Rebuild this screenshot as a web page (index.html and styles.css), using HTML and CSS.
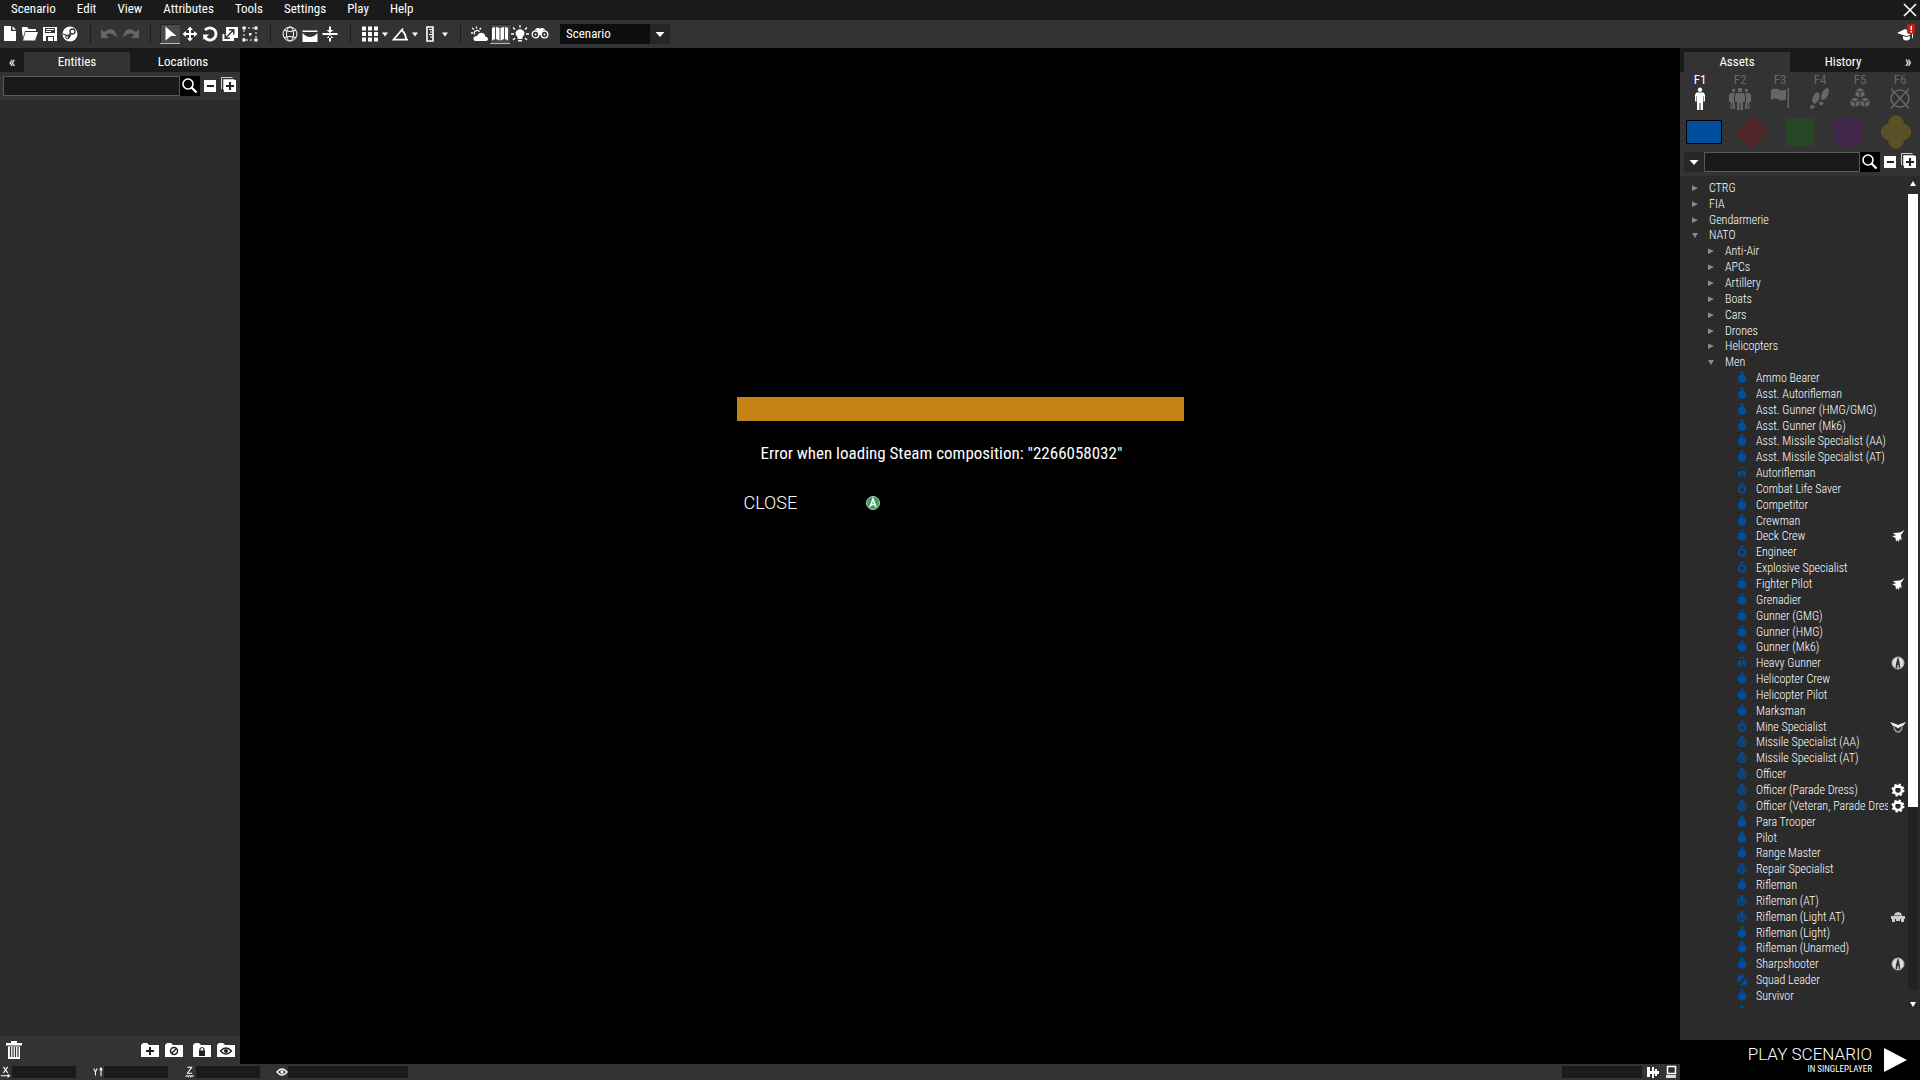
FILE: index.html
```html
<!DOCTYPE html>
<html lang="en">
<head>
<meta charset="utf-8">
<title>Scenario Editor</title>
<link rel="stylesheet" href="styles.css">
</head>
<body>
<svg class="defs" aria-hidden="true">
  <symbol id="search" viewBox="0 0 20 20"><circle cx="8" cy="8" r="5" fill="none" stroke="#fff" stroke-width="1.6"/><path d="M11.5 11.5l5 5" stroke="#fff" stroke-width="2.4"/></symbol>
  <symbol id="minus" viewBox="0 0 20 20"><path fill="#fff" d="M4 4h12v12H4z"/><path fill="#222" d="M7 9h7v2H7z"/></symbol>
  <symbol id="plus" viewBox="0 0 20 20"><path d="M1.500 13V1.500h11M3.500 14V3.500h11" fill="none" stroke="#ccc"/><path fill="#fff" d="M4 4h12v12H4z"/><path fill="#222" d="M9 6h2v3h3v2h-3v3H9v-3H6V9h3z"/></symbol>
  <symbol id="down" viewBox="0 0 10 20"><path fill="#fff" d="M2 8.500h6L5 12.500z"/></symbol>
  <symbol id="bigdown" viewBox="0 0 20 20"><path fill="#fff" d="M5.500 8h9L10 13z"/></symbol>
  <symbol id="closed" viewBox="0 0 16 16"><path fill="#8a8a8a" d="M5 5.500l6 2.500-6 3z"/></symbol>
  <symbol id="open" viewBox="0 0 16 16"><path fill="#8a8a8a" d="M5 6h6l-3 5z"/></symbol>
  <symbol id="man" viewBox="0 0 16 16"><circle cx="8" cy="8.500" r="4.300" fill="#004f9e"/><path d="M6 2.500h4v1H6zM7 1.500h2v1H7z" fill="#004f9e"/></symbol>
  <symbol id="man-ring" viewBox="0 0 16 16"><circle cx="8" cy="8.500" r="3.200" fill="none" stroke="#004f9e" stroke-width="2"/><path d="M6 2.500h4v1H6zM7 1.500h2v1H7z" fill="#004f9e"/></symbol>
  <symbol id="man-gun" viewBox="0 0 16 16"><path d="M7 4.500v4.500l-1 3Q4 11 4 8.500 4 5.500 7 4.500zM9 4.500v4.500l1 3q2-1 2-3.500 0-3-3-4z" fill="#004f9e"/><path d="M8 6v4M6 2.500h4" stroke="#004f9e" fill="none"/></symbol>
  <symbol id="man-x" viewBox="0 0 16 16"><circle cx="8" cy="8.500" r="3.800" fill="none" stroke="#004f9e" stroke-width="1.500"/><path d="M5.500 6l5 5m0-5l-5 5M6 3h4" stroke="#004f9e" stroke-width="1.300"/></symbol>
  <symbol id="man-at" viewBox="0 0 16 16"><circle cx="8" cy="8.500" r="3.800" fill="none" stroke="#004f9e" stroke-width="1.500"/><path d="M8 6l-1.500 2h3L8 11M6 3h4" stroke="#004f9e" stroke-width="1.300" fill="none"/></symbol>
  <symbol id="man-lead" viewBox="0 0 16 16"><path d="M4 10.500a4 4 0 0 1 6.500-5.500zM6 12.500a4 4 0 0 0 6-6zM6 2.500h4v1H6z" fill="#004f9e"/></symbol>
  <symbol id="jet" viewBox="0 0 16 16"><path fill="#fff" d="M14.500 2L10 4.500 3 5l3 2.500L2 8l3.500 2 .5 3.500 1.500-1.500L9 14l.5-3 2 1-.5-5z"/></symbol>
  <symbol id="apex" viewBox="0 0 16 16"><circle cx="8" cy="8" r="6" fill="#ddd" stroke="#aaa"/><path fill="#333" d="M7.500 3h1l1 4 .8 6H9l-.5-3h-1v3H5.500L6 8.500z"/></symbol>
  <symbol id="wings" viewBox="0 0 16 16"><path fill="#eee" d="M0 3l6 2 2 1 2-1 6-2-3 4-3 1-2 1.500L6 8 3 7z"/><path fill="none" stroke="#999" stroke-width="1.500" d="M4 8q1 5 4 5t4-5"/></symbol>
  <symbol id="gear" viewBox="0 0 16 16"><circle cx="8" cy="8" r="4" fill="none" stroke="#fff" stroke-width="2.600"/><circle cx="8" cy="8" r="5.500" fill="none" stroke="#fff" stroke-width="2" stroke-dasharray="2.200 2.120"/><path d="M6 5.500h4" stroke="#fff"/></symbol>
  <symbol id="truck" viewBox="0 0 16 16"><path fill="#ccc" d="M1 7h3l1-3 3-1 3 1 1 3h3v3H1zM2 9h3v4H2zm9 0h3v4h-3zM6 9h4v3H6z"/><path stroke="#777" d="M5 6.500h6"/></symbol>
  <symbol id="folder" viewBox="0 0 20 20"><path fill="#fff" d="M1 17V5l2-2h4l2 2h10v12z"/></symbol>
  <symbol id="eye" viewBox="0 0 12 12"><path d="M1 6q5-6 10 0-5 6-10 0z" fill="none" stroke="#fff" stroke-width="1.300"/><circle cx="6" cy="6" r="1.700" fill="#fff"/></symbol>
</svg>

<nav class="menubar" aria-label="Main menu">
  <button>Scenario</button><button>Edit</button><button>View</button><button>Attributes</button><button>Tools</button><button>Settings</button><button>Play</button><button>Help</button>
  <button class="exit" aria-label="Close editor"><svg viewBox="0 0 20 20"><path d="M4 4l12 12M16 4L4 16" stroke="#fff" stroke-width="1.600"/></svg></button>
</nav>

<div class="toolbar">
  <button aria-label="New"><svg viewBox="0 0 20 20"><path fill="#fff" d="M4 2h7v5h5v10H4zM12.500 2L16 5.800h-3.500z"/></svg></button>
  <button aria-label="Open"><svg viewBox="0 0 20 20"><path fill="#fff" d="M2 7V3h5l2 2h7v2H5l-2 7zM5.500 8H18l-3 8.500H3z"/></svg></button>
  <button aria-label="Save"><svg viewBox="0 0 20 20"><path fill="#fff" d="M3 3h14v14H3z"/><path fill="#333" d="M5 4h10v5H5zM6 12h8v5H6z"/><path fill="#fff" d="M6 5h8v1H6zm0 2h5v1H6zM8 13h5v4H8z"/></svg></button>
  <button aria-label="Publish"><svg viewBox="0 0 20 20"><circle cx="10" cy="10" r="7.500" fill="#fff"/><circle cx="12.500" cy="7.500" r="2.500" fill="none" stroke="#333" stroke-width="1.300"/><path d="M3 10l5 2 3-3M11 11l-3 3" stroke="#333" fill="none" stroke-width="1.300"/><circle cx="7.500" cy="13" r="1.800" fill="none" stroke="#333"/></svg></button>
  <i class="sep"></i>
  <button aria-label="Undo"><svg viewBox="0 0 20 20"><path fill="#666" d="M1 5v9h8L6 11q5-4 11 3-1-10-8-8.500Q6 6 4 8z"/></svg></button>
  <button aria-label="Redo"><svg viewBox="0 0 20 20"><path fill="#666" d="M19 5v9h-8l3-3Q9 7 3 14 4 4 11 5.500 14 6 16 8z"/></svg></button>
  <i class="sep"></i>
  <button class="on" aria-label="Select"><svg viewBox="0 0 20 20"><path fill="#fff" d="M5.500 2.500L16.500 12H11l-5.500 4.500z"/></svg></button>
  <button aria-label="Move"><svg viewBox="0 0 20 20"><path fill="#fff" d="M10 2.500L13 6h-2v3h3V7l3.500 3-3.500 3v-2h-3v3h2l-3 3.500L7 14h2v-3H6v2l-3.500-3L6 7v2h3V6H7z"/></svg></button>
  <button aria-label="Rotate"><svg viewBox="0 0 20 20"><path d="M5 6Q8 3 12 4.300 16 6 16 10q-.5 5-5 6-4 .5-6-3" fill="none" stroke="#fff" stroke-width="2.800"/><path fill="#fff" d="M3 10.500h6L3.500 16z"/></svg></button>
  <button aria-label="Scale"><svg viewBox="0 0 20 20"><path fill="#fff" d="M6 3h12v11h-4v3H2.500v-7H6z"/><path d="M5.500 14l8-8M9 5.800h4.800v4.700M5.200 10v4.200H10" fill="none" stroke="#333" stroke-width="1.500"/></svg></button>
  <button aria-label="Area"><svg viewBox="0 0 20 20"><path d="M4 4h12v12H4z" fill="none" stroke="#fff" stroke-dasharray="2 2"/><path fill="#fff" d="M2.500 2.500h3v3h-3zm12 0h3v3h-3zm-12 12h3v3h-3zm12 0h3v3h-3zM9 9h2.500v2.500H9z"/></svg></button>
  <i class="sep"></i>
  <button aria-label="Coordinate space"><svg viewBox="0 0 20 20"><g fill="none" stroke="#fff"><circle cx="10" cy="10" r="7"/><ellipse cx="10" cy="10" rx="3.500" ry="7"/><path d="M4 6.500q6 2 12 0M4 13.500q6-2 12 0"/></g></svg></button>
  <button aria-label="Surface"><svg viewBox="0 0 20 20"><path fill="#fff" d="M2.500 6.500h15V8h-15zM2.500 9Q10 17 17.500 9v9h-15z"/></svg></button>
  <button aria-label="Vertical mode"><svg viewBox="0 0 20 20"><path fill="#fff" d="M2.500 9h15v2h-15zM9 2.500h2V8H9zM9 12h2v5.500H9zM6.500 6h7L10 9zM6.500 14h7L10 11z"/></svg></button>
  <i class="sep"></i>
  <button aria-label="Translation grid"><svg viewBox="0 0 20 20"><path d="M2 4.500h16M2 10h16M2 15.500h16" stroke="#fff" stroke-width="4" stroke-dasharray="4 2"/></svg></button>
  <button class="half" aria-label="Translation options"><svg><use href="#down"/></svg></button>
  <button aria-label="Rotation grid"><svg viewBox="0 0 20 20"><path d="M13 4.500L3.500 15.700h14.500M12 6.500q4 3.500 4 9" fill="none" stroke="#fff" stroke-width="1.700"/></svg></button>
  <button class="half" aria-label="Rotation options"><svg><use href="#down"/></svg></button>
  <button aria-label="Scaling grid"><svg viewBox="0 0 20 20"><path d="M7 3h6v14H7z" fill="none" stroke="#fff" stroke-width="1.600"/><path d="M9 5.500h4M10 8h3M9 10.500h4M10 13h3" stroke="#fff" stroke-width="1.200"/></svg></button>
  <button class="half" aria-label="Scaling options"><svg><use href="#down"/></svg></button>
  <i class="sep"></i>
  <button aria-label="Weather"><svg viewBox="0 0 20 20"><path fill="#fff" d="M5 17q-2-1-1.500-3.500Q5 11.500 7 12q2-4 5.500-3 3 1 2.500 3.500 3 .5 3 2.500t-2 2z"/><path d="M4.500 10.500Q3.500 7 7 6.300q2 0 2.500 1.500M1 9h2M2 4l2 1.500M6.500 2.500v2M11 4L9.700 5.500" stroke="#fff" stroke-width="1.300" fill="none"/></svg></button>
  <button class="on" aria-label="Map"><svg viewBox="0 0 20 20"><path fill="#fff" d="M2 4l3-1v12l-3 1.500zM6 3l3.500 1v12.500L6 15zM10.500 4L14 3v12l-3.500 1.500zM15 3l3 1v12.500L15 15z"/></svg></button>
  <button aria-label="Lighting"><svg viewBox="0 0 20 20"><path fill="#fff" d="M7.500 13q-2.500-2-2-4.500Q6.500 5.500 10 5.300q3.500.2 4.500 3.200.5 2.500-2 4.500v2h-5zM8 16h4v1.500H8z"/><path d="M10 1v2.500M1 10h3M16 10h3M3 3.500l2 2M17 3.500l-2 2M3 16l2-2M17 16l-2-2" stroke="#fff" stroke-width="1.300"/></svg></button>
  <button aria-label="Vision"><svg viewBox="0 0 20 20"><g fill="none" stroke="#fff" stroke-width="1.300"><circle cx="5.500" cy="10.500" r="3.300"/><circle cx="14.500" cy="10.500" r="3.300"/></g><circle cx="5.500" cy="10.500" r="1" fill="#fff"/><circle cx="14.500" cy="10.500" r="1" fill="#fff"/><path fill="#fff" d="M4 6.500l3-2.500h2l1 1 1-1h2l3 2.500h-3l-2 2.500v2H9V9L7 6.500z"/></svg></button>
  <select class="combo" aria-label="Scenario phase"><option>Scenario</option></select><span class="combo-arrow"><svg><use href="#bigdown"/></svg></span>
  <button class="tutorial" aria-label="Tutorials"><svg viewBox="0 0 20 20"><path fill="#fff" d="M1 9l8-4 8 4v4l-1 2V9.500l-2 1V15q-4 3-7 0v-4z"/><path d="M7 11.500q4 2 7 0" stroke="#333" fill="none"/><rect x="11" y="0" width="8" height="10" rx="2" fill="#c4201a"/><path fill="#fff" d="M14.500 2h1.500v4h-1.500zM14.500 7h1.500v1.500h-1.500z"/></svg></button>
</div>

<div class="workspace">
  <div class="stage">
    <aside class="left">
      <div class="tabs"><button class="fold">«</button><button class="tab active">Entities</button><button class="tab">Locations</button></div>
      <div class="searchrow"><input type="text" aria-label="Search entities"><button class="find" aria-label="Search"><svg><use href="#search"/></svg></button><button aria-label="Collapse all"><svg><use href="#minus"/></svg></button><button aria-label="Expand all"><svg><use href="#plus"/></svg></button></div>
      <div class="entities"></div>
      <div class="layerbar">
        <button class="trash" aria-label="Delete"><svg viewBox="0 0 20 20"><path fill="#fff" d="M2 3h5V1h6v2h5v2.500H2zM4 6.500h12V19H4z"/><path d="M6.500 7v10M9 7v10M11.500 7v10M14 7v10" stroke="#333" stroke-width="1.200"/></svg></button>
        <button aria-label="New layer"><svg viewBox="0 0 20 20"><use href="#folder"/><path d="M10 7v8M6 11h8" stroke="#222" stroke-width="2"/></svg></button>
        <button aria-label="Disable layer"><svg viewBox="0 0 20 20"><use href="#folder"/><circle cx="10" cy="11" r="3.500" fill="none" stroke="#222" stroke-width="1.500"/><path d="M7.500 13.500l5-5" stroke="#222" stroke-width="1.500"/></svg></button>
        <button class="lock" aria-label="Lock layer"><svg viewBox="0 0 20 20"><use href="#folder"/><path fill="#222" d="M7 10.500h6V16H7z"/><path d="M8 11V9q2-3 4 0v2" fill="none" stroke="#222" stroke-width="1.200"/></svg></button>
        <button aria-label="Toggle layer visibility"><svg viewBox="0 0 20 20"><use href="#folder"/><path d="M4.500 11q5.500-6 11 0-5.500 6-11 0z" fill="none" stroke="#222" stroke-width="1.400"/><circle cx="10" cy="11" r="2" fill="#222"/></svg></button>
      </div>
    </aside>
    <main>
      <section class="dialog" role="alertdialog" aria-labelledby="msg">
        <div class="title"></div>
        <p id="msg">Error when loading Steam composition: "2266058032"</p>
        <button class="close">CLOSE<svg viewBox="0 0 14 14" aria-hidden="true"><circle cx="7" cy="7" r="6.500" fill="#3e9a63" stroke="#a9d8b8"/><path d="M4 11l3-8 3 8M5 8.500h4" fill="none" stroke="#fff" stroke-width="1.600"/></svg></button>
      </section>
    </main>
  </div>

  <footer class="status">
    <label><svg viewBox="0 0 12 14"><path d="M3 1l5 7M8 1L3 8M0 11.500h9" stroke="#fff" stroke-width="1.200"/><path fill="#fff" d="M8 9l3 2.500L8 14z"/></svg><input type="text" aria-label="X"></label>
    <label><svg viewBox="0 0 12 14"><path d="M1 3l2 4 2-4M3 7v4M9.500 3v9" stroke="#fff" stroke-width="1.200" fill="none"/><path fill="#fff" d="M7.500 5l2-4 2 4z"/></svg><input type="text" aria-label="Y"></label>
    <label><svg viewBox="0 0 12 14"><path d="M3 1.500h5L3 8.500h5.500M1 12.500q1.500-3 3 0 1.500-3 3 0 1.500-3 3 0" stroke="#fff" stroke-width="1.200" fill="none"/></svg><input type="text" aria-label="Z"></label>
    <label><svg viewBox="0 0 12 12"><use href="#eye"/></svg><input class="wide" type="text" aria-label="View distance"></label>
    <output></output>
    <span class="indicators">
      <svg viewBox="0 0 14 14"><path fill="#fff" d="M1 2h3v4h2V2h2v4h1V4h2v2h2v3h-2v2H9V9H8v4H6V9H4v3H1z"/></svg>
      <svg viewBox="0 0 14 14"><path fill="none" stroke="#fff" stroke-width="1.500" d="M3.500 1.500h8v7h-8z"/><path fill="#ddd" d="M2 10h10v3H2z"/></svg>
    </span>
  </footer>

  <aside class="right">
    <div class="tabs"><button class="tab active">Assets</button><button class="tab">History</button><button class="fold">»</button></div>
    <div class="modes">
      <button class="current">F1<svg viewBox="0 0 24 24"><circle cx="12" cy="2.800" r="2.200" fill="#fff"/><path fill="#fff" d="M8.500 5.500h7l1.500 2v7h-1.500V9H15v14h-2.500v-7h-1v7H9V9h-.5v5.500H7v-7z"/></svg></button>
      <button>F2<svg viewBox="0 0 24 24"><path fill="#666" d="M10 1h4v4h-4zM4 2h3v3H4zm13 0h3v3h-3zM8.500 6h7L17 8v7h-2v8h-2.500v-7h-1v7H9v-8H7V8zM1 7l2-1h4L6 8v8h1v6H4.500v-6h-.8v6H2.500v-7H1zM17 6h4l2 1v8h-1.500v7h-1.200v-6h-.8v6H17v-6h1V8z"/></svg></button>
      <button>F3<svg viewBox="0 0 24 24"><path fill="#666" d="M19.500 1H21v20h-1.500zM3 3q4-2.500 8-.5t7 0v10q-3.500 2-7.500 0T3 13z"/></svg></button>
      <button>F4<svg viewBox="0 0 24 24"><g fill="#666"><ellipse cx="8" cy="11" rx="3.200" ry="6" transform="rotate(22 8 11)"/><ellipse cx="17" cy="7" rx="3.200" ry="6.500" transform="rotate(25 17 7)"/><path d="M3 17.500l4 1.500-2 3-3-.5zM12 14l4 2-2 2.500-3-1z"/></g></svg></button>
      <button>F5<svg viewBox="0 0 24 24"><path fill="#666" d="M12 1l4 2-4 2-4-2zM7.500 4l4 2v4.500l-4-2zM16.500 4l-4 2v4.500l4-2zM7 10.500l4 2-4 2-4-2zM17 10.500l4 2-4 2-4-2zM2.500 13.500l4 2V20l-4-2zM11.500 13.500l-4 2V20l4-2zM12.500 13.500l4 2V20l-4-2zM21.500 13.500l-4 2V20l4-2z"/></svg></button>
      <button>F6<svg viewBox="0 0 24 24"><ellipse cx="12" cy="11.500" rx="9" ry="8.500" fill="none" stroke="#666" stroke-width="1.600"/><path d="M3 1.500l18 20M21 1.500l-18 20" stroke="#666" stroke-width="1.600"/></svg></button>
    </div>
    <div class="sides">
      <button aria-label="BLUFOR"><svg viewBox="0 0 36 36"><path d="M.5 6.500h35v23H.5z" fill="#004d9b" stroke="#000"/></svg></button>
      <button aria-label="OPFOR"><svg viewBox="0 0 36 36"><path d="M18 2l16 16-16 16L2 18z" fill="#4e2628" stroke="#5c2022"/></svg></button>
      <button aria-label="Independent"><svg viewBox="0 0 36 36"><path d="M5 5h26v26H5z" fill="#264726" stroke="#1c501f"/></svg></button>
      <button aria-label="Civilian"><svg viewBox="0 0 36 36"><path d="M5 5h26v26H5z" fill="#40264a" stroke="#4c1c5c"/></svg></button>
      <button aria-label="Empty"><svg viewBox="0 0 36 36"><path d="M11 10.500a7.200 7.200 0 1 1 14 0 7.500 7.500 0 1 1 0 15 7.200 7.200 0 1 1-14 0 7.500 7.500 0 1 1 0-15z" fill="#5a4f26" stroke="#655616"/></svg></button>
    </div>
    <div class="searchrow"><button class="filter" aria-label="Filter"><svg><use href="#bigdown"/></svg></button><input type="text" aria-label="Search assets"><button class="find" aria-label="Search"><svg><use href="#search"/></svg></button><button aria-label="Collapse all"><svg><use href="#minus"/></svg></button><button aria-label="Expand all"><svg><use href="#plus"/></svg></button></div>
    <div class="assets">
      <ul class="tree">
        <li><svg><use href="#closed"/></svg><span>CTRG</span></li>
        <li><svg><use href="#closed"/></svg><span>FIA</span></li>
        <li><svg><use href="#closed"/></svg><span>Gendarmerie</span></li>
        <li><svg><use href="#open"/></svg><span>NATO</span></li>
        <li class="l1"><svg><use href="#closed"/></svg><span>Anti-Air</span></li>
        <li class="l1"><svg><use href="#closed"/></svg><span>APCs</span></li>
        <li class="l1"><svg><use href="#closed"/></svg><span>Artillery</span></li>
        <li class="l1"><svg><use href="#closed"/></svg><span>Boats</span></li>
        <li class="l1"><svg><use href="#closed"/></svg><span>Cars</span></li>
        <li class="l1"><svg><use href="#closed"/></svg><span>Drones</span></li>
        <li class="l1"><svg><use href="#closed"/></svg><span>Helicopters</span></li>
        <li class="l1"><svg><use href="#open"/></svg><span>Men</span></li>
        <li class="l2"><svg><use href="#man"/></svg><span>Ammo Bearer</span></li>
        <li class="l2"><svg><use href="#man"/></svg><span>Asst. Autorifleman</span></li>
        <li class="l2"><svg><use href="#man"/></svg><span>Asst. Gunner (HMG/GMG)</span></li>
        <li class="l2"><svg><use href="#man"/></svg><span>Asst. Gunner (Mk6)</span></li>
        <li class="l2"><svg><use href="#man"/></svg><span>Asst. Missile Specialist (AA)</span></li>
        <li class="l2"><svg><use href="#man"/></svg><span>Asst. Missile Specialist (AT)</span></li>
        <li class="l2"><svg><use href="#man-gun"/></svg><span>Autorifleman</span></li>
        <li class="l2"><svg><use href="#man-ring"/></svg><span>Combat Life Saver</span></li>
        <li class="l2"><svg><use href="#man"/></svg><span>Competitor</span></li>
        <li class="l2"><svg><use href="#man"/></svg><span>Crewman</span></li>
        <li class="l2"><svg><use href="#man"/></svg><span>Deck Crew</span><svg><use href="#jet"/></svg></li>
        <li class="l2"><svg><use href="#man-ring"/></svg><span>Engineer</span></li>
        <li class="l2"><svg><use href="#man-ring"/></svg><span>Explosive Specialist</span></li>
        <li class="l2"><svg><use href="#man"/></svg><span>Fighter Pilot</span><svg><use href="#jet"/></svg></li>
        <li class="l2"><svg><use href="#man"/></svg><span>Grenadier</span></li>
        <li class="l2"><svg><use href="#man"/></svg><span>Gunner (GMG)</span></li>
        <li class="l2"><svg><use href="#man"/></svg><span>Gunner (HMG)</span></li>
        <li class="l2"><svg><use href="#man"/></svg><span>Gunner (Mk6)</span></li>
        <li class="l2"><svg><use href="#man-gun"/></svg><span>Heavy Gunner</span><svg><use href="#apex"/></svg></li>
        <li class="l2"><svg><use href="#man"/></svg><span>Helicopter Crew</span></li>
        <li class="l2"><svg><use href="#man"/></svg><span>Helicopter Pilot</span></li>
        <li class="l2"><svg><use href="#man"/></svg><span>Marksman</span></li>
        <li class="l2"><svg><use href="#man-ring"/></svg><span>Mine Specialist</span><svg><use href="#wings"/></svg></li>
        <li class="l2"><svg><use href="#man-at"/></svg><span>Missile Specialist (AA)</span></li>
        <li class="l2"><svg><use href="#man-at"/></svg><span>Missile Specialist (AT)</span></li>
        <li class="l2"><svg><use href="#man-x"/></svg><span>Officer</span></li>
        <li class="l2"><svg><use href="#man-x"/></svg><span>Officer (Parade Dress)</span><svg><use href="#gear"/></svg></li>
        <li class="l2"><svg><use href="#man-x"/></svg><span>Officer (Veteran, Parade Dress)</span><svg><use href="#gear"/></svg></li>
        <li class="l2"><svg><use href="#man"/></svg><span>Para Trooper</span></li>
        <li class="l2"><svg><use href="#man"/></svg><span>Pilot</span></li>
        <li class="l2"><svg><use href="#man"/></svg><span>Range Master</span></li>
        <li class="l2"><svg><use href="#man-x"/></svg><span>Repair Specialist</span></li>
        <li class="l2"><svg><use href="#man"/></svg><span>Rifleman</span></li>
        <li class="l2"><svg><use href="#man-at"/></svg><span>Rifleman (AT)</span></li>
        <li class="l2"><svg><use href="#man-at"/></svg><span>Rifleman (Light AT)</span><svg><use href="#truck"/></svg></li>
        <li class="l2"><svg><use href="#man"/></svg><span>Rifleman (Light)</span></li>
        <li class="l2"><svg><use href="#man"/></svg><span>Rifleman (Unarmed)</span></li>
        <li class="l2"><svg><use href="#man"/></svg><span>Sharpshooter</span><svg><use href="#apex"/></svg></li>
        <li class="l2"><svg><use href="#man-lead"/></svg><span>Squad Leader</span></li>
        <li class="l2"><svg><use href="#man"/></svg><span>Survivor</span></li>
        <li class="l2 cut"><svg><use href="#man"/></svg></li>
      </ul>
      <div class="scroll">
        <svg viewBox="0 0 10 18"><path fill="#fff" d="M2 10h6L5 5z"/></svg>
        <div class="track"><div class="thumb"></div></div>
        <svg viewBox="0 0 10 18"><path fill="#fff" d="M2 12h6l-3 5z"/></svg>
      </div>
    </div>
    <button class="play"><span>PLAY SCENARIO<small>IN SINGLEPLAYER</small></span><svg viewBox="0 0 24 24"><path fill="#fff" d="M0 0l23 12L0 24z"/></svg></button>
  </aside>
</div>
</body>
</html>
```
FILE: styles.css
```css
* { box-sizing: border-box; }
body {
  margin: 0;
  height: 100vh;
  display: flex;
  flex-direction: column;
  overflow: hidden;
  background: #000;
  color: #fff;
  font: 300 13px/16px "Roboto Condensed", "Liberation Sans Narrow", Roboto, sans-serif;
}
button, input, select { font: inherit; color: inherit; border: 0; margin: 0; padding: 0; background: none; border-radius: 0; }
input { min-width: 0; background: #1a1a1a; }
svg { display: block; flex: none; }
.defs { position: absolute; width: 0; height: 0; }

.menubar { display: flex; flex: none; height: 20px; background: #1a1a1a; font-weight: 400; }
.menubar button { padding: 0 10px 2px 11px; }
.menubar .exit { margin-left: auto; padding: 0; }
.exit svg, .toolbar svg, .searchrow svg { width: 20px; height: 20px; }

.toolbar { display: flex; flex: none; align-items: center; height: 28px; background: #333; }
.toolbar button { width: 20px; height: 20px; }
.toolbar .half, .toolbar .half svg { width: 10px; }
.toolbar .on { background: #4a4a4a; box-shadow: inset 0 -1px #bbb, inset 1px 1px #222; }
.sep { width: 20px; height: 20px; background: linear-gradient(#1c1c1c, #1c1c1c) center / 1px 100% no-repeat; }
.combo { appearance: none; width: 90px; height: 20px; margin-left: 10px; padding: 0 6px; background: #0d0d0d; font-weight: 400; line-height: 20px; }
.combo-arrow { background: #262626; }
.toolbar .tutorial { margin: 0 4px 0 auto; }

.workspace { flex: 1; min-height: 0; display: grid; grid-template: 1fr 16px / 1fr 240px; }
.stage { display: flex; min-height: 0; }
.right { grid-area: 1 / 2 / 3 / 3; display: flex; flex-direction: column; min-height: 0; background: #2b2b2b; }
.left { width: 240px; display: flex; flex-direction: column; background: #2b2b2b; }
main { flex: 1; display: flex; justify-content: center; align-items: flex-start; }

.tabs { display: flex; flex: none; height: 24px; padding: 4px 4px 0 0; background: #1a1a1a; font-weight: 400; }
.tab { flex: 1; }
.tab.active { background: #333; }
.fold { width: 24px; font-size: 16px; }
.right .tabs { padding: 4px 0 0 4px; }

.searchrow { display: flex; flex: none; height: 28px; padding: 4px 0 4px 3px; background: #333; }
.searchrow input { flex: 1; border: 1px solid #5a5a5a; }
.searchrow button { width: 20px; }
.searchrow .find { background: #000; }
.right .searchrow { height: 26px; padding: 2px 0 4px 4px; }
.searchrow .filter { background: #262626; }
.entities { flex: 1; }
.layerbar { display: flex; flex: none; align-items: center; height: 28px; padding: 0 4px; gap: 4px; background: #333; }
.layerbar svg { width: 20px; height: 20px; }
.layerbar .trash { margin-right: auto; }
.layerbar .lock { margin-left: 4px; }

.dialog { width: 447px; margin-top: 349px; }
.title { height: 24px; background: #c58315; }
.dialog p { margin: 0; padding: 20px 24px 28px; font-size: 17px; line-height: 24px; font-weight: 400; }
.close { display: flex; align-items: center; justify-content: space-between; width: 150px; padding: 0 7px; font: 300 18px/20px Roboto, sans-serif; }
.close svg { width: 14px; height: 14px; }

.status { display: flex; align-items: center; gap: 16px; background: #333; }
.status label { display: flex; }
.status label svg { width: 12px; height: 12px; }
.status input { width: 64px; height: 12px; }
.status .wide { width: 120px; }
.status output { width: 80px; height: 12px; margin-left: auto; background: #1a1a1a; }
.indicators { display: flex; gap: 4px; margin-left: -12px; padding-right: 2px; }
.indicators svg { width: 14px; height: 14px; }

.modes { display: flex; flex: none; height: 40px; background: #333; }
.modes button { flex: 1; display: flex; flex-direction: column; align-items: center; padding-top: 1px; color: #666; font-weight: 400; line-height: 14px; }
.modes .current { color: #fff; }
.modes svg { width: 24px; height: 24px; }
.sides { display: flex; flex: none; height: 38px; background: #333; }
.sides button { flex: 1; display: flex; justify-content: center; }
.sides svg { width: 36px; height: 40px; }

.assets { flex: 1; min-height: 0; display: flex; padding: 0 2px 32px 7px; }
.tree { flex: 1; min-width: 0; display: flex; flex-direction: column; list-style: none; margin: 0; padding: 4px 2px 0 0; font-size: 12px; }
.tree li { flex: 1 1 0; min-height: 0; display: flex; align-items: center; gap: 6px; }
.tree svg { width: 16px; height: 16px; }
.tree span { flex: 1; overflow: hidden; white-space: nowrap; }
.tree span + svg { margin-left: -4px; }
.tree .l1 { padding-left: 16px; }
.tree .l2 { padding-left: 47px; }
.tree .cut { flex: none; height: 4px; align-items: flex-start; overflow: hidden; }
.scroll { width: 10px; display: flex; flex-direction: column; }
.scroll svg { width: 10px; height: 18px; }
.track { flex: 1; background: #222; }
.thumb { height: 77%; background: #fff; }

.play { flex: none; display: flex; align-items: center; justify-content: flex-end; gap: 12px; height: 40px; padding-right: 12px; background: #000; font: 300 17px/18px Roboto, sans-serif; text-align: right; }
.play small { display: block; font: 400 9px/12px "Roboto Condensed", Roboto, sans-serif; }
.play svg { width: 24px; height: 24px; }
```
